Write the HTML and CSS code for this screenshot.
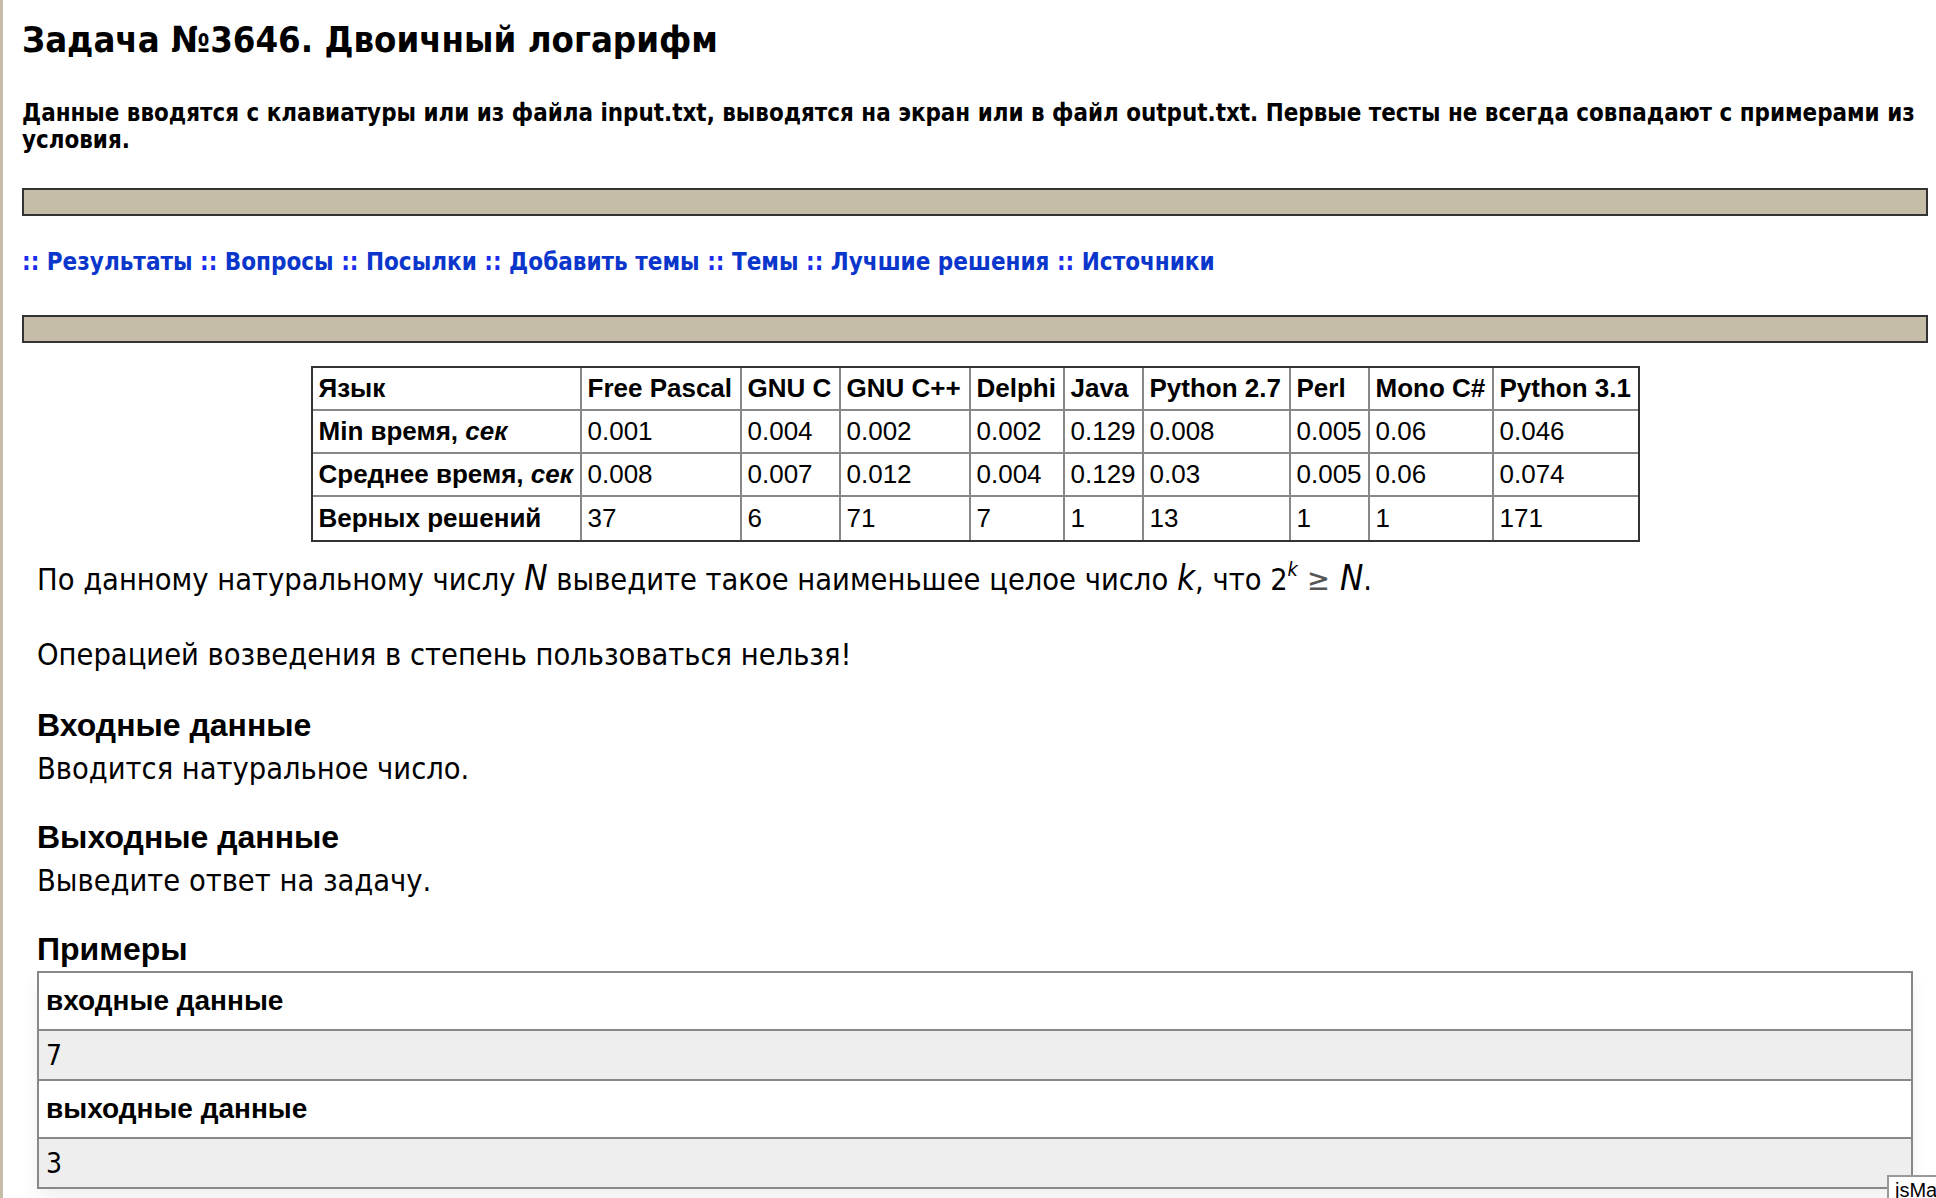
FILE: index.html
```html
<!DOCTYPE html>
<html lang="ru">
<head>
<meta charset="utf-8">
<title>Задача №3646. Двоичный логарифм</title>
<link rel="stylesheet" href="styles.css">
</head>
<body>
<div class="page">
  <h1 class="title">Задача №3646. Двоичный логарифм</h1>
  <p class="notice">Данные вводятся с клавиатуры или из файла input.txt, выводятся на экран или в файл output.txt. Первые тесты не всегда совпадают с примерами из условия.</p>
  <div class="bar"></div>
  <nav class="links">
    <span class="sep">::</span> <a href="#">Результаты</a> <span class="sep">::</span> <a href="#">Вопросы</a> <span class="sep">::</span> <a href="#">Посылки</a> <span class="sep">::</span> <a href="#">Добавить темы</a> <span class="sep">::</span> <a href="#">Темы</a> <span class="sep">::</span> <a href="#">Лучшие решения</a> <span class="sep">::</span> <a href="#">Источники</a>
  </nav>
  <div class="bar"></div>
  <table class="stats">
    <tr class="head">
      <th>Язык</th><th>Free Pascal</th><th>GNU C</th><th>GNU C++</th><th>Delphi</th><th>Java</th><th>Python 2.7</th><th>Perl</th><th>Mono C#</th><th>Python 3.1</th>
    </tr>
    <tr>
      <th>Min время, <i>сек</i></th><td>0.001</td><td>0.004</td><td>0.002</td><td>0.002</td><td>0.129</td><td>0.008</td><td>0.005</td><td>0.06</td><td>0.046</td>
    </tr>
    <tr>
      <th>Среднее время, <i>сек</i></th><td>0.008</td><td>0.007</td><td>0.012</td><td>0.004</td><td>0.129</td><td>0.03</td><td>0.005</td><td>0.06</td><td>0.074</td>
    </tr>
    <tr>
      <th>Верных решений</th><td>37</td><td>6</td><td>71</td><td>7</td><td>1</td><td>13</td><td>1</td><td>1</td><td>171</td>
    </tr>
  </table>
  <div class="problem">
    <p class="para">По данному натуральному числу <i class="m">N</i> выведите такое наименьшее целое число <i class="m">k</i>, что 2<sup><i class="m">k</i></sup><span class="ge">≥</span><i class="m">N</i>.</p>
    <p class="para before-head">Операцией возведения в степень пользоваться нельзя!</p>
    <h3 class="sub">Входные данные</h3>
    <p class="para tight">Вводится натуральное число.</p>
    <h3 class="sub">Выходные данные</h3>
    <p class="para tight">Выведите ответ на задачу.</p>
    <h3 class="sub">Примеры</h3>
    <table class="examples">
      <tr class="ex-head"><th>входные данные</th></tr>
      <tr class="ex-data"><td>7</td></tr>
      <tr class="ex-head"><th>выходные данные</th></tr>
      <tr class="ex-data"><td>3</td></tr>
    </table>
  </div>
</div>
<div class="jsmath">jsMath</div>
</body>
</html>
```
FILE: styles.css
```css
html, body {
  margin: 0;
  padding: 0;
  background: #fff;
}
body {
  font-family: "DejaVu Sans Condensed", "DejaVu Sans", sans-serif;
  color: #000;
}
.page {
  border-left: 3px solid #c5bda8;
  padding: 18px 8px 40px 19px;
  min-height: 1198px;
  box-sizing: border-box;
}
.title {
  margin: 0;
  font-size: 36.2px;
  line-height: 44px;
  font-weight: bold;
}
.notice {
  margin: 38px 0 0 0;
  font-size: 23.9px;
  line-height: 27px;
  font-weight: bold;
}
.bar {
  height: 24px;
  background: #c5bda8;
  border: 2px solid #333;
  margin-top: 34px;
}
.links {
  margin-top: 31px;
  font-size: 24px;
  line-height: 30px;
  font-weight: bold;
}
.links a {
  color: #0a36cc;
  text-decoration: none;
}
.links .sep {
  color: #1a2cf0;
}
.links + .bar {
  margin-top: 38px;
}
.stats {
  margin: 23px auto 0;
  border-collapse: separate;
  border-spacing: 0;
  border: 2px solid #333;
  font-family: "Liberation Sans", Arial, sans-serif;
  font-size: 26px;
  table-layout: fixed;
  width: 1329px;
}
.stats th, .stats td {
  border-right: 2px solid #888;
  border-bottom: 2px solid #888;
  height: 43px;
  padding: 0 6px;
  text-align: left;
  vertical-align: middle;
  white-space: nowrap;
  box-sizing: border-box;
}
.stats th { font-weight: bold; }
.stats td { font-weight: normal; }
.stats tr > :last-child { border-right: none; }
.stats tr:last-child > * { border-bottom: none; }
.stats tr > :nth-child(1) { width: 269px; }
.stats tr > :nth-child(2) { width: 160px; }
.stats tr > :nth-child(3) { width: 99px; }
.stats tr > :nth-child(4) { width: 130px; }
.stats tr > :nth-child(5) { width: 94px; }
.stats tr > :nth-child(6) { width: 79px; }
.stats tr > :nth-child(7) { width: 147px; }
.stats tr > :nth-child(8) { width: 79px; }
.stats tr > :nth-child(9) { width: 124px; }
.stats tr > :nth-child(10) { width: 144px; }

.problem {
  padding: 0 15px;
  margin-top: 21px;
}
.para {
  margin: 0 0 41px 0;
  font-size: 30.5px;
  line-height: 34px;
}
.para.before-head {
  margin-bottom: 34px;
}
.para.tight {
  margin-bottom: 32px;
}
.m {
  font-style: italic;
  font-size: 1.14em;
  line-height: 0;
}
sup {
  font-size: 18px;
  line-height: 0;
  vertical-align: 14px;
}
sup .m {
  font-size: 1.1em;
}
.ge {
  display: inline-block;
  margin: 0 10px 0 9px;
  color: #555;
}
.sub {
  margin: 0 0 8px 0;
  font-family: "Liberation Sans", Arial, sans-serif;
  font-size: 32px;
  line-height: 38px;
  font-weight: bold;
}
.sub + .examples {
  margin-top: -5px;
}
.examples {
  width: 100%;
  border-collapse: collapse;
  box-shadow: 0 10px 18px rgba(0,0,0,0.06);
}
.examples th, .examples td {
  border: 2px solid #888;
  text-align: left;
  padding: 0 7px;
}
.ex-head th {
  height: 56px;
  background: #fff;
  font-family: "Liberation Sans", Arial, sans-serif;
  font-size: 28px;
  font-weight: bold;
}
.ex-data td {
  height: 48px;
  background: #eee;
  font-size: 28px;
}
.jsmath {
  position: fixed;
  left: 1887px;
  top: 1175px;
  padding: 2px 6px;
  border: 2px solid #999;
  background: #fff;
  font-family: "Liberation Sans", Arial, sans-serif;
  font-size: 20px;
  line-height: 22px;
  white-space: nowrap;
}
```
